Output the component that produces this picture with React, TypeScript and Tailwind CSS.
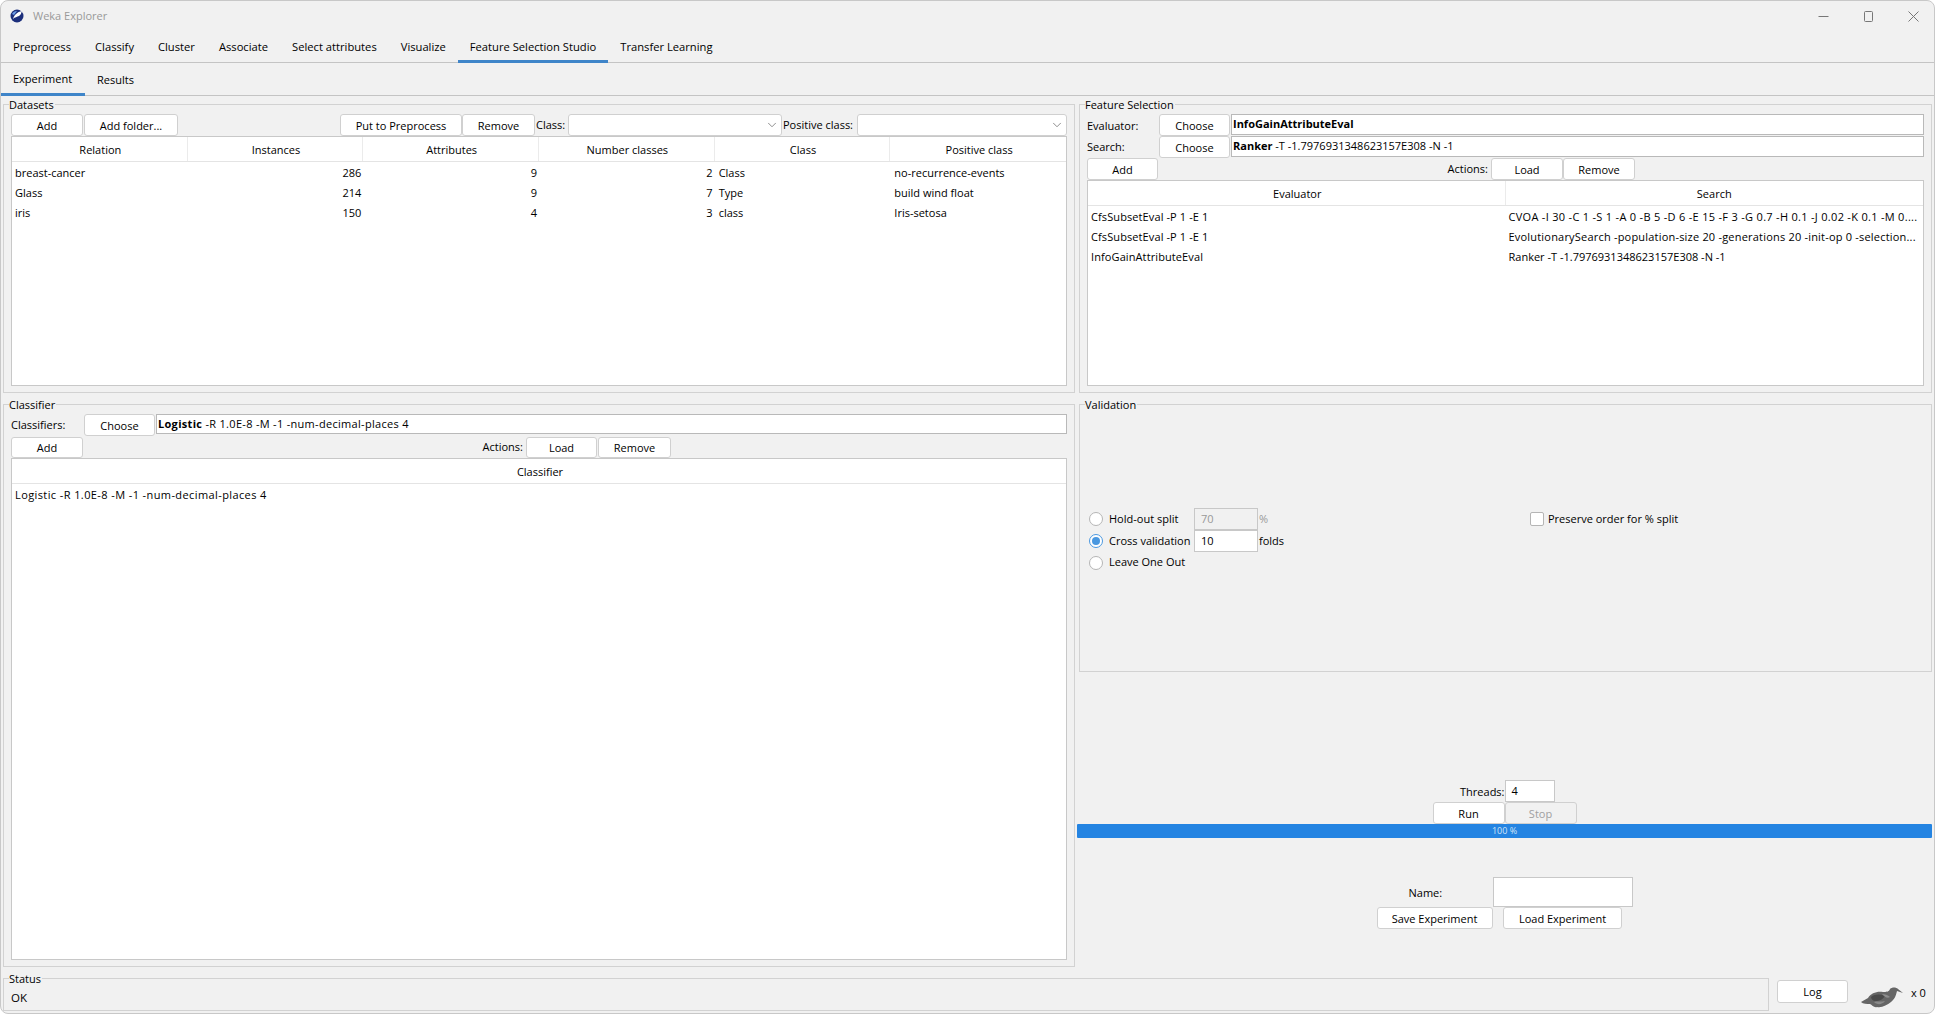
import React from 'react';
import { ChevronDown } from 'lucide-react';

const mainTabs = ['Preprocess', 'Classify', 'Cluster', 'Associate', 'Select attributes', 'Visualize', 'Feature Selection Studio', 'Transfer Learning'];

const datasetCols = ['Relation', 'Instances', 'Attributes', 'Number classes', 'Class', 'Positive class'];
const datasets = [
  ['breast-cancer', '286', '9', '2', 'Class', 'no-recurrence-events'],
  ['Glass', '214', '9', '7', 'Type', 'build wind float'],
  ['iris', '150', '4', '3', 'class', 'Iris-setosa'],
];

const fsRows = [
  ['CfsSubsetEval -P 1 -E 1', 'CVOA -I 30 -C 1 -S 1 -A 0 -B 5 -D 6 -E 15 -F 3 -G 0.7 -H 0.1 -J 0.02 -K 0.1 -M 0....', 'tracking-[0.3px]'],
  ['CfsSubsetEval -P 1 -E 1', 'EvolutionarySearch -population-size 20 -generations 20 -init-op 0 -selection...', 'tracking-[0.2px]'],
  ['InfoGainAttributeEval', 'Ranker -T -1.7976931348623157E308 -N -1', ''],
];

function Group({ title, className, children }: { title: string; className: string; children: React.ReactNode }) {
  return (
    <fieldset className={`min-w-0 border border-[#d2d2d2] px-[7px] ${className}`}>
      <legend className="-ml-[2px] pr-[1px] pt-[1px] text-[11px] leading-[15px]">{title}</legend>
      {children}
    </fieldset>
  );
}

function Btn({ className, disabled, children }: { className: string; disabled?: boolean; children: React.ReactNode }) {
  return (
    <button
      className={`shrink-0 rounded-[3px] border border-[#d0d0d0] text-center text-[11px] leading-none ${disabled ? 'bg-[#f1f1f1] text-[#a0a0a0]' : 'bg-white text-black'} ${className}`}
    >
      {children}
    </button>
  );
}

function Combo({ className }: { className: string }) {
  return (
    <div className={`flex h-[22px] items-center justify-end rounded-[3px] border border-[#d0d0d0] bg-white pr-[2px] ${className}`}>
      <ChevronDown className="h-[14px] w-[14px] text-[#666]" strokeWidth={1.25} />
    </div>
  );
}

function Field({ bold, rest, className }: { bold: string; rest: string; className: string }) {
  return (
    <div className={`border border-[#b9b9b9] bg-white pl-[1px] text-[11px] leading-[18px] ${className}`}>
      <b className="font-bold">{bold}</b> {rest}
    </div>
  );
}

function Radio({ checked }: { checked?: boolean }) {
  return (
    <span className={`flex h-[14px] w-[14px] shrink-0 items-center justify-center rounded-full border bg-white ${checked ? 'border-[#4a98e0]' : 'border-[#b5b5b5]'}`}>
      {checked && <span className="h-[8px] w-[8px] rounded-full bg-[#4a98e0]" />}
    </span>
  );
}

function WekaIcon() {
  return (
    <svg width="14" height="14" viewBox="0 0 14 14">
      <circle cx="7" cy="7" r="6.5" fill="#1c2f7c" />
      <path d="M3 10 C4 6 7 3 12 2 C11 4 11 6 9 7 C7 8 5 8 3 10Z" fill="#fff" />
      <path d="M2 5 C3 3 5 2 7 2 L4 6Z" fill="#6d9ee8" />
    </svg>
  );
}

function Bird() {
  return (
    <svg width="46" height="22" viewBox="0 0 46 22">
      <path d="M1 16 L8 12 C11 7 17 5 23 6 C26 6 29 6 30 3 C32 1 36 1 38 3 L43 7 L37 5 C36 9 35 13 31 16 C27 19 22 22 17 21 C14 22 12 19 10 18 C7 18 3 18 1 16Z" fill="#666" />
      <path d="M11 11 C15 8 20 8 25 10 C23 13 20 15 15 15 C13 15 11 13 11 11Z" fill="#4a4a4a" />
      <path d="M22 8 C25 8 28 9 30 11 C27 13 25 11 22 8Z" fill="#8e8e8e" />
      <path d="M14 16 C17 15 21 16 25 15 C22 19 17 19 14 16Z" fill="#8a8a8a" />
    </svg>
  );
}

export default function App() {
  return (
    <div className="flex h-[1014px] w-[1935px] flex-col overflow-hidden rounded-lg border border-[#c8c8c8] bg-[#f1f1f1] font-['Open_Sans',sans-serif] text-[11px] text-black">
      {/* title bar */}
      <div className="flex h-[29px] shrink-0 items-center pl-[9px] pt-[1px]">
        <WekaIcon />
        <span className="ml-[9px] text-[#999]">Weka Explorer</span>
        <div className="ml-auto flex items-center gap-[34px] pr-[15px]">
          <svg width="11" height="11" viewBox="0 0 11 11"><path d="M0.5 5.5H10.5" stroke="#777" /></svg>
          <svg width="11" height="11" viewBox="0 0 11 11" fill="none"><rect x="1.5" y="0.5" width="8" height="10" rx="1" stroke="#777" /></svg>
          <svg width="11" height="11" viewBox="0 0 11 11"><path d="M0.5 0.5L10.5 10.5M10.5 0.5L0.5 10.5" stroke="#777" /></svg>
        </div>
      </div>

      {/* main tabs */}
      <div className="flex h-[33px] shrink-0 border-b border-[#c4c4c4] text-[11.2px]">
        {mainTabs.map((t) => (
          <div key={t} className={`-mb-px flex items-center px-[12px] pt-[4px] ${t === 'Feature Selection Studio' ? 'border-b-[3px] border-[#3f85c9]' : 'pb-[3px]'}`}>
            {t}
          </div>
        ))}
      </div>

      {/* sub tabs */}
      <div className="flex h-[33px] shrink-0 border-b border-[#c4c4c4]">
        <div className="-mb-px flex w-[84px] items-center border-b-[3px] border-[#3f85c9] pl-[12px] pt-[3px]">Experiment</div>
        <div className="flex items-center px-[12px] pt-[2px]">Results</div>
      </div>

      <div className="flex h-[871px] shrink-0 gap-[4px] pl-[2px]">
        {/* left column */}
        <div className="flex w-[1072px] shrink-0 flex-col gap-[3px]">
          <Group title="Datasets" className="h-[297px] pb-[7px] pt-[2px]">
            <div className="flex h-[22px] items-center">
              <Btn className="h-[22px] w-[72px]">Add</Btn>
              <Btn className="ml-[1px] h-[22px] w-[94px]">Add folder...</Btn>
              <Btn className="ml-[162px] h-[22px] w-[122px]">Put to Preprocess</Btn>
              <Btn className="h-[22px] w-[73px]">Remove</Btn>
              <span className="ml-[1px] w-[32px]">Class:</span>
              <Combo className="w-[214px]" />
              <span className="ml-[1px] w-[74px]">Positive class:</span>
              <Combo className="w-[210px]" />
            </div>
            <div className="h-[250px] border border-[#c8c8c8] bg-white">
              <div className="grid h-[25px] grid-cols-6 border-b border-[#e4e4e4]">
                {datasetCols.map((c) => (
                  <div key={c} className="flex items-center justify-center border-r border-[#ebebeb] pl-[2px] pt-[3px] last:border-r-0">{c}</div>
                ))}
              </div>
              {datasets.map((r) => (
                <div key={r[0]} className="grid h-[20px] grid-cols-6 items-center pt-[3px]">
                  <div className="pl-[3px]">{r[0]}</div>
                  <div className="pr-[2px] text-right">{r[1]}</div>
                  <div className="pr-[2px] text-right">{r[2]}</div>
                  <div className="pr-[2px] text-right">{r[3]}</div>
                  <div className="pl-[4px]">{r[4]}</div>
                  <div className="pl-[4px]">{r[5]}</div>
                </div>
              ))}
            </div>
          </Group>

          <Group title="Classifier" className="h-[571px] pb-[7px] pt-[2px]">
            <div className="flex h-[22px] items-start">
              <span className="w-[73px] self-center pt-[1px]">Classifiers:</span>
              <Btn className="h-[22px] w-[71px]">Choose</Btn>
              <Field bold="Logistic" rest="-R 1.0E-8 -M -1 -num-decimal-places 4" className="ml-[1px] h-[20px] flex-1 tracking-[0.3px]" />
            </div>
            <div className="mt-[1px] flex h-[21px] items-center">
              <Btn className="h-[21px] w-[72px]">Add</Btn>
              <span className="ml-[393px] w-[47px] text-right">Actions:</span>
              <Btn className="ml-[3px] h-[21px] w-[71px]">Load</Btn>
              <Btn className="ml-[1px] h-[21px] w-[73px]">Remove</Btn>
            </div>
            <div className="h-[502px] border border-[#c8c8c8] bg-white">
              <div className="flex h-[25px] items-center justify-center border-b border-[#e4e4e4] pl-[2px] pt-[3px]">Classifier</div>
              <div className="flex h-[22px] items-center pl-[3px] pt-[1px] tracking-[0.4px]">Logistic -R 1.0E-8 -M -1 -num-decimal-places 4</div>
            </div>
          </Group>
        </div>

        {/* right column */}
        <div className="flex w-[853px] shrink-0 flex-col">
          <Group title="Feature Selection" className="h-[297px] pb-[7px] pt-[2px]">
            <div className="flex h-[22px] items-start">
              <span className="w-[72px] self-center pt-[2px]">Evaluator:</span>
              <Btn className="h-[22px] w-[71px]">Choose</Btn>
              <Field bold="InfoGainAttributeEval" rest="" className="ml-[1px] h-[21px] flex-1" />
            </div>
            <div className="flex h-[22px] items-start">
              <span className="w-[72px] self-center pt-[1px]">Search:</span>
              <Btn className="h-[22px] w-[71px]">Choose</Btn>
              <Field bold="Ranker" rest="-T -1.7976931348623157E308 -N -1" className="ml-[1px] h-[21px] flex-1" />
            </div>
            <div className="flex h-[22px] items-center">
              <Btn className="h-[22px] w-[71px]">Add</Btn>
              <span className="ml-[287px] w-[43px] text-right">Actions:</span>
              <Btn className="ml-[3px] h-[22px] w-[72px]">Load</Btn>
              <Btn className="h-[22px] w-[72px]">Remove</Btn>
            </div>
            <div className="h-[206px] border border-[#c8c8c8] bg-white">
              <div className="grid h-[25px] grid-cols-2 border-b border-[#e4e4e4]">
                <div className="flex items-center justify-center border-r border-[#ebebeb] pl-[2px] pt-[2px]">Evaluator</div>
                <div className="flex items-center justify-center pt-[2px]">Search</div>
              </div>
              {fsRows.map((r) => (
                <div key={r[1]} className="grid h-[20px] grid-cols-2 items-center whitespace-nowrap pt-[3px]">
                  <div className="pl-[3px] tracking-[0.1px]">{r[0]}</div>
                  <div className={`overflow-hidden pl-[3px] ${r[2]}`}>{r[1]}</div>
                </div>
              ))}
            </div>
          </Group>

          <Group title="Validation" className="mt-[3px] h-[276px]">
            <div className="mt-[96px] flex pl-[2px]">
              <div className="w-[441px] shrink-0">
                <div className="flex h-[22px] items-center">
                  <Radio />
                  <span className="ml-[6px] w-[85px]">Hold-out split</span>
                  <div className="flex h-[22px] w-[64px] items-center border border-[#c8c8c8] bg-[#f1f1f1] pl-[6px] text-[#999]">70</div>
                  <span className="ml-[1px] text-[#999]">%</span>
                </div>
                <div className="flex h-[22px] items-center">
                  <Radio checked />
                  <span className="ml-[6px] w-[85px]">Cross validation</span>
                  <div className="flex h-[22px] w-[64px] items-center border border-[#c8c8c8] bg-white pl-[6px]">10</div>
                  <span className="ml-[1px]">folds</span>
                </div>
                <div className="flex h-[21px] items-center">
                  <Radio />
                  <span className="ml-[6px]">Leave One Out</span>
                </div>
              </div>
              <div className="flex h-[22px] items-center">
                <span className="h-[14px] w-[14px] rounded-[2px] border border-[#b5b5b5] bg-white" />
                <span className="ml-[4px]">Preserve order for % split</span>
              </div>
            </div>
          </Group>

          {/* run controls */}
          <div className="-ml-[2px] mt-[108px] flex flex-col">
            <div className="grid grid-cols-2">
              <div className="flex h-[22px] items-center justify-end pt-[2px]">Threads:</div>
              <div className="flex h-[22px] w-[50px] items-center border border-[#c8c8c8] bg-white pl-[6px]">4</div>
              <div className="flex justify-end">
                <Btn className="h-[22px] w-[72px]">Run</Btn>
              </div>
              <div>
                <Btn disabled className="h-[22px] w-[72px]">Stop</Btn>
              </div>
            </div>
            <div className="flex h-[14px] items-center justify-center rounded-[1px] bg-[#2484e2] text-[9px] text-[#cfe3f7]">100 %</div>
            <div className="mx-auto mt-[39px] grid w-[256px] grid-cols-[116px_140px]">
              <div className="flex h-[30px] items-center pl-[32px] pt-[2px]">Name:</div>
              <div className="h-[30px] border border-[#c8c8c8] bg-white" />
              <Btn className="h-[22px] w-[116px]">Save Experiment</Btn>
              <div className="flex justify-center">
                <Btn className="h-[22px] w-[119px]">Load Experiment</Btn>
              </div>
            </div>
          </div>
        </div>
      </div>

      {/* status */}
      <div className="mt-[3px] flex h-[41px] shrink-0 pl-[2px]">
        <Group title="Status" className="h-[41px] w-[1766px] shrink-0 pt-[2px]">
          <div className="text-[11.5px] leading-[20px]">OK</div>
        </Group>
        <div className="ml-[8px] mt-[10px] flex h-[23px] items-start">
          <Btn className="h-[23px] w-[71px]">Log</Btn>
          <div className="ml-[12px] mt-[6px]"><Bird /></div>
          <span className="ml-[5px] mt-[5px]">x 0</span>
        </div>
      </div>
    </div>
  );
}
